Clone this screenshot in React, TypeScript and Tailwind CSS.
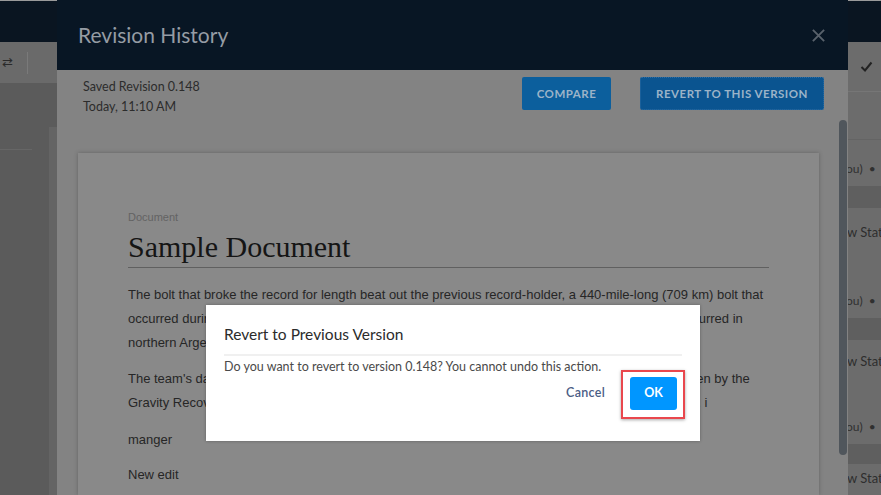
import React from "react";

const sans = "font-['Lato','Open_Sans',sans-serif]";
const arial = "font-['Liberation_Sans',Arial,sans-serif]";

const LeftStrip: React.FC = () => (
    <div className="w-[57px] h-full flex flex-col bg-[#5b5b5b]">
        <div className="h-[42px] bg-[#0a1521] border-t border-[#9a9a9a]" />
        <div className="h-[41px] bg-[#6a6a6a] flex items-center gap-[14px] pl-[2px]">
            <span className={`${arial} text-[13px] text-[#2a2a2a]`}>⇄</span>
            <div className="w-px h-[22px] bg-[#7a7a7a]" />
        </div>
        <div className="flex-1 flex">
            <div className="flex-1 flex flex-col pt-[66px]">
                <div className="h-px bg-[#666] mr-[17px]" />
            </div>
            <div className="w-[8px] mt-[44px] bg-[#646464]" />
        </div>
    </div>
);

const YouRow: React.FC<{ h: string }> = ({ h }) => (
    <div className={`${h} flex items-end pb-[8px]`}>
        <span className={`${sans} -ml-[2px] text-[12px] text-[#303030] whitespace-nowrap`}>ou)&nbsp;&nbsp;•</span>
    </div>
);

const StatusRow: React.FC<{ h: string }> = ({ h }) => (
    <div className={`${h} flex items-center`}>
        <span className={`${sans} -ml-[1px] text-[13px] text-[#2e2e2e] whitespace-nowrap`}>w Status</span>
    </div>
);

const RightStrip: React.FC = () => (
    <div className="w-[33px] h-full flex flex-col bg-[#6c6c6c] overflow-hidden">
        <div className="h-[42px] bg-[#0a1521] border-t border-[#9a9a9a]" />
        <div className="h-[50px] flex items-center pl-[12px] border-b border-[#767676]">
            <svg width="13" height="11" viewBox="0 0 13 11">
                <path d="M1.5 6 L5 9.5 L11.5 1.5" fill="none" stroke="#222" strokeWidth="2" />
            </svg>
        </div>
        <div className="h-[48px] border-b border-[#646464]" />
        <div className="flex flex-col">
            <YouRow h="h-[46px]" />
            <div className="h-[22px] bg-[#5f5f5f]" />
            <StatusRow h="h-[50px]" />
            <YouRow h="h-[60px]" />
            <div className="h-[22px] bg-[#5f5f5f]" />
            <StatusRow h="h-[44px]" />
            <YouRow h="h-[60px]" />
            <div className="h-[20px] bg-[#5f5f5f]" />
            <StatusRow h="h-[30px]" />
        </div>
    </div>
);

const Paper: React.FC = () => (
    <div className="mt-[36px] ml-[21px] mr-[20px] flex-1 bg-[#898989] shadow-[0_0_4px_rgba(0,0,0,0.25)] px-[50px] pt-[57px] overflow-hidden">
        <div className={`${arial} text-[11px] leading-[14px] text-[#636363]`}>Document</div>
        <div className="font-['Liberation_Serif','Times_New_Roman',serif] text-[30px] leading-[36px] text-[#151515] mt-[5px] pb-[2px] border-b border-[#606060]">
            Sample Document
        </div>
        <div className={`${arial} text-[13px] leading-[24px] text-[#262626] whitespace-nowrap`}>
            <p className="mt-[15px]">
                The bolt that broke the record for length beat out the previous record-holder, a 440-mile-long (709 km) bolt that
                <br />
                occurred during 2007 in the United States. The longest-lasting bolt, at 16.73 seconds long, also occurred in
                <br />
                northern Argentina, on March 4, 2019.
            </p>
            <p className="mt-[12px]">
                The team's data came from new observations of lightning flashes recently made by instruments taken by the
                <br />
                Gravity Recovery and Climate Experiment satellites, which now record storms from orbit over Earth. i
            </p>
            <p className="mt-[13px]">manger</p>
            <p className="mt-[11px]">New edit</p>
        </div>
    </div>
);

const RevisionModal: React.FC = () => (
    <div className="w-[791px] h-full flex flex-col bg-[#838383]">
        <div className="h-[70px] shrink-0 bg-[#081624] flex items-center justify-between pl-[21px] pr-[22px]">
            <span className={`${sans} text-[21px] text-[#959ca4] pb-[1px]`}>Revision History</span>
            <svg width="15" height="15" viewBox="0 0 16 16">
                <path d="M2 2 L14 14 M14 2 L2 14" stroke="#59616b" strokeWidth="2" />
            </svg>
        </div>
        <div className="flex-1 flex min-h-0">
            <div className="flex-1 flex flex-col min-w-0">
                <div className="flex items-start justify-between pl-[26px] pr-[15px] pt-[7px]">
                    <div className={`${sans} text-[12.5px] leading-[20px] text-[#2c2c2c]`}>
                        <div>Saved Revision 0.148</div>
                        <div>Today, 11:10 AM</div>
                    </div>
                    <div className="flex gap-[29px]">
                        <button className={`${sans} w-[89px] h-[33px] rounded-[2px] bg-[#0c5f9d] text-[#9bb3c8] text-[11.5px] font-bold tracking-[0.5px]`}>
                            COMPARE
                        </button>
                        <button className={`${sans} w-[184px] h-[33px] rounded-[2px] bg-[#0a5490] border border-dotted border-[#2d6da3] text-[#9bb3c8] text-[11.5px] font-bold tracking-[0.5px]`}>
                            REVERT TO THIS VERSION
                        </button>
                    </div>
                </div>
                <Paper />
            </div>
            <div className="w-[8px] mr-[1px] mt-[50px] mb-[40px] rounded-full bg-[#50565c]" />
        </div>
    </div>
);

const ConfirmDialog: React.FC = () => (
    <div className="absolute left-[206px] top-[305px] w-[494px] h-[136px] bg-white shadow-[0_0_3px_rgba(0,0,0,0.3)] px-[18px] pt-[19px]">
        <div className={`${sans} text-[15.5px] leading-[20px] text-[#2b2b2b]`}>Revert to Previous Version</div>
        <div className="mt-[10px] h-[2px] bg-[#f0f0f0]" />
        <div className={`${sans} mt-[3px] text-[12.5px] leading-[16px] text-[#4a4a4a]`}>
            Do you want to revert to version 0.148? You cannot undo this action.
        </div>
        <div className="mt-[2px] mr-[5px] flex items-center justify-end gap-[25px]">
            <button className={`${sans} text-[12.5px] font-semibold text-[#4a5d85] tracking-[0.3px]`}>Cancel</button>
            <div className="relative">
                <button className={`${sans} w-[47px] h-[33px] rounded-[3px] bg-[#0096ff] text-white text-[12.5px] font-bold`}>OK</button>
                <div className="absolute -left-[9px] -top-[7px] -right-[8px] -bottom-[9px] border-2 border-[#e9474d] shadow-[0_1px_3px_rgba(0,0,0,0.35)]" />
            </div>
        </div>
    </div>
);

const App: React.FC = () => {
    return (
        <div className="relative w-[881px] h-[495px] overflow-hidden flex bg-[#5b5b5b]">
            <LeftStrip />
            <RevisionModal />
            <RightStrip />
            <ConfirmDialog />
        </div>
    );
};

export default App;
